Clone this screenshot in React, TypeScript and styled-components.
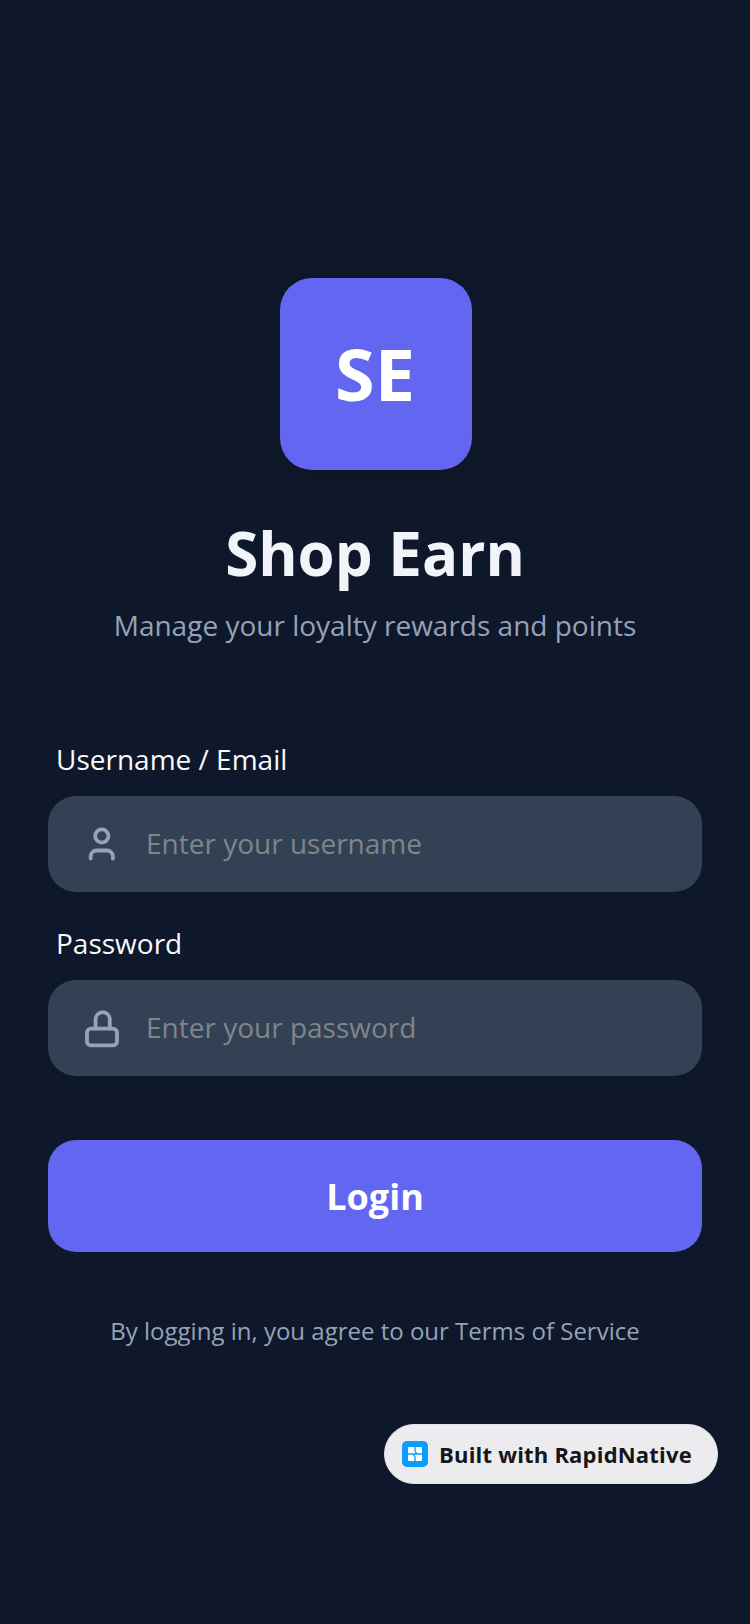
import React from "react";
import styled, { createGlobalStyle } from "styled-components";

const GlobalStyle = createGlobalStyle`
  html, body {
    margin: 0;
    padding: 0;
    background: #0f172a;
    font-family: "Open Sans", "Noto Sans", sans-serif;
  }
`;

const S = {
  Screen: styled.main`
    position: relative;
    box-sizing: border-box;
    width: 750px;
    height: 1624px;
    padding: 278px 48px 0;
    display: flex;
    flex-direction: column;
    overflow: hidden;
    background: #0f172a;
  `,
  Header: styled.header`
    display: flex;
    flex-direction: column;
    align-items: center;
    margin-bottom: 96px;
  `,
  Logo: styled.div`
    box-sizing: border-box;
    width: 192px;
    height: 192px;
    margin-left: 2px;
    margin-bottom: 39px;
    padding: 0 2px 2px 0;
    border-radius: 32px;
    display: flex;
    align-items: center;
    justify-content: center;
    background: #6366f1;
    color: #ffffff;
    font-size: 72px;
    font-weight: 700;
    line-height: 92px;
    box-shadow: 0 8px 24px rgba(0, 0, 0, 0.08);
  `,
  Title: styled.h1`
    margin: 0 0 9px;
    color: #f1f5f9;
    font-size: 60px;
    font-weight: 700;
    line-height: 88px;
  `,
  Subtitle: styled.p`
    margin: 0;
    color: #94a3b8;
    font-size: 28px;
    line-height: 38px;
  `,
  Form: styled.form`
    display: flex;
    flex-direction: column;
    margin: 0;
  `,
  Field: styled.div`
    display: flex;
    flex-direction: column;
    margin-bottom: 32px;
    &:last-of-type {
      margin-bottom: 64px;
    }
  `,
  Label: styled.label`
    margin: 0 0 18px 8px;
    color: #f8fafc;
    font-size: 28px;
    line-height: 38px;
  `,
  InputBox: styled.div`
    box-sizing: border-box;
    height: 96px;
    padding: 0 32px 0 34px;
    display: flex;
    align-items: center;
    gap: 24px;
    border-radius: 28px;
    background: #334155;
  `,
  Input: styled.input`
    flex: 1;
    min-width: 0;
    padding: 0 0 2px;
    border: 0;
    outline: 0;
    background: transparent;
    color: #f8fafc;
    font-family: inherit;
    font-size: 28px;
    &::placeholder {
      color: #80858b;
      opacity: 1;
    }
  `,
  Icon: styled.svg`
    flex: none;
    width: 40px;
    height: 40px;
    fill: none;
    stroke: #94a3b8;
    stroke-width: 3.8;
    stroke-linecap: round;
    stroke-linejoin: round;
  `,
  Button: styled.button`
    height: 112px;
    padding: 0;
    border: 0;
    border-radius: 28px;
    background: #6366f1;
    color: #ffffff;
    font-family: inherit;
    font-size: 36px;
    font-weight: 700;
  `,
  Terms: styled.p`
    margin: 60px 0 0;
    color: #94a3b8;
    font-size: 24px;
    line-height: 38px;
    text-align: center;
  `,
  Badge: styled.a`
    position: absolute;
    left: 384px;
    top: 1424px;
    box-sizing: border-box;
    width: 334px;
    height: 60px;
    padding-left: 17px;
    display: flex;
    align-items: center;
    gap: 11px;
    border-radius: 30px;
    border: 1px solid #dfe3ea;
    background: #ececee;
    color: #14161a;
    font-size: 22px;
    font-weight: 700;
    letter-spacing: 0.2px;
    white-space: nowrap;
  `,
  BadgeMark: styled.svg`
    flex: none;
    width: 26px;
    height: 26px;
  `,
};

const App: React.FC = () => {
  return (
    <S.Screen>
      <GlobalStyle />
      <S.Header>
        <S.Logo>SE</S.Logo>
        <S.Title>Shop Earn</S.Title>
        <S.Subtitle>Manage your loyalty rewards and points</S.Subtitle>
      </S.Header>
      <S.Form>
        <S.Field>
          <S.Label>Username / Email</S.Label>
          <S.InputBox>
            <S.Icon viewBox="0 0 40 40">
              <circle cx="19.8" cy="12" r="6.6" />
              <path d="M8.7 34.5v-2a6 6 0 0 1 6-6h10.2a6 6 0 0 1 6 6v2" />
            </S.Icon>
            <S.Input type="text" placeholder="Enter your username" />
          </S.InputBox>
        </S.Field>
        <S.Field>
          <S.Label>Password</S.Label>
          <S.InputBox>
            <S.Icon viewBox="0 0 40 40">
              <rect x="5" y="20.6" width="30" height="16.8" rx="4" />
              <path d="M13.6 20.6v-9.3a7.1 7.1 0 0 1 14.2 0v9.3" />
            </S.Icon>
            <S.Input type="text" placeholder="Enter your password" />
          </S.InputBox>
        </S.Field>
        <S.Button type="button">Login</S.Button>
      </S.Form>
      <S.Terms>By logging in, you agree to our Terms of Service</S.Terms>
      <S.Badge>
        <S.BadgeMark viewBox="0 0 26 26">
          <rect width="26" height="26" rx="5" fill="#0a9dfb" />
          <rect x="6" y="6" width="14" height="14" rx="1" fill="#ffffff" />
          <path d="M13 6v4l2 3M20 13h-4l-3 0M13 20v-4l-2-3M6 13h4l3 0" fill="none" stroke="#0a9dfb" strokeWidth="1.3" />
        </S.BadgeMark>
        Built with RapidNative
      </S.Badge>
    </S.Screen>
  );
};

export default App;
